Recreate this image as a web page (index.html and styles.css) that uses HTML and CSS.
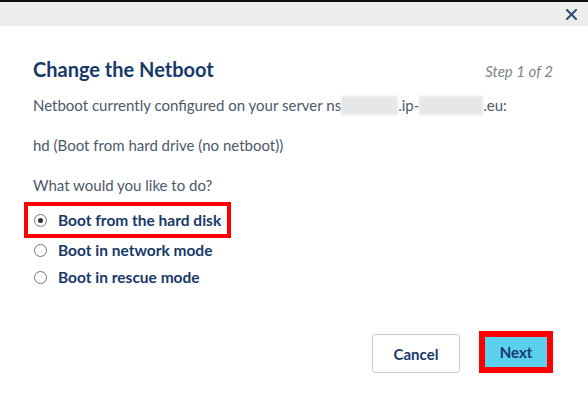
FILE: index.html
```html
<!DOCTYPE html>
<html lang="en">
<head>
<meta charset="utf-8">
<title>Change the Netboot</title>
<link rel="stylesheet" href="styles.css">
</head>
<body>
<div class="modal">
  <div class="topline"></div>
  <div class="header">
    <button class="close" aria-label="Close">
      <svg width="11" height="11" viewBox="0 0 11 11"><path d="M1 1 L10 10 M10 1 L1 10" stroke="#2f4f78" stroke-width="2" stroke-linecap="square"/></svg>
    </button>
  </div>
  <div class="body">
    <div class="title-row">
      <h1 class="title">Change the Netboot</h1>
      <span class="step">Step 1 of 2</span>
    </div>
    <p class="text">Netboot currently configured on your server ns<span class="blur b1"></span>.ip-<span class="blur b2"></span>.eu:</p>
    <p class="text">hd (Boot from hard drive (no netboot))</p>
    <p class="text question">What would you like to do?</p>
    <div class="options">
      <label class="option highlight"><span class="radio checked"></span><span class="label">Boot from the hard disk</span></label>
      <label class="option"><span class="radio"></span><span class="label">Boot in network mode</span></label>
      <label class="option"><span class="radio"></span><span class="label">Boot in rescue mode</span></label>
    </div>
  </div>
  <div class="footer">
    <button class="btn cancel">Cancel</button>
    <div class="next-wrap"><button class="btn next">Next</button></div>
  </div>
</div>
</body>
</html>
```
FILE: styles.css
```css
* { box-sizing: border-box; }
html, body { margin: 0; padding: 0; background: #fff; }
body { font-family: Lato, "Open Sans", sans-serif; width: 588px; height: 393px; overflow: hidden; }

.topline { height: 2px; background: #0f110f; }
.header {
  height: 24px;
  background: #eceeeb;
  display: flex;
  justify-content: flex-end;
  align-items: center;
  padding-right: 11px;
}
.close {
  border: 0; background: transparent; padding: 0; margin: 0;
  width: 11px; height: 11px; display: block;
}
.close svg { display: block; }

.body { padding: 30px 35px 0 33px; }
.title-row { display: flex; justify-content: space-between; align-items: baseline; height: 26px; }
.title {
  margin: 0;
  font-size: 20px;
  font-weight: 700;
  color: #17396a;
  line-height: 26px;
}
.step {
  font-style: italic;
  font-size: 15px;
  color: #7b838d;
}
.text {
  margin: 0;
  font-size: 15px;
  color: #4c596a;
  line-height: 20px;
}
.title-row + .text { margin-top: 13px; }
.text + .text { margin-top: 20px; }
.blur {
  display: inline-block;
  height: 19px;
  vertical-align: -4px;
  background: #e6e7e8;
  filter: blur(1px);
}
.b1 { width: 57px; }
.b2 { width: 64px; }

.options { margin-top: 7px; margin-left: -9px; display: flex; flex-direction: column; }
.option {
  display: flex;
  align-items: center;
  height: 30px;
  padding-left: 6px;
  border: 4px solid transparent;
  width: 207px;
  font-size: 15.5px;
  font-weight: 700;
  color: #17396a;
}
.option.highlight { border-color: #ff0000; height: 36px; }
.option + .option { margin-top: -3px; }
.radio {
  width: 13px; height: 13px;
  border: 1px solid #777;
  border-radius: 50%;
  margin-right: 11px;
  display: flex; align-items: center; justify-content: center;
  flex: none;
}
.radio.checked::after {
  content: "";
  width: 5px; height: 5px; border-radius: 50%;
  background: #333;
}

.footer {
  display: flex;
  justify-content: flex-end;
  align-items: flex-end;
  gap: 19px;
  padding: 0 35px 0 0;
  margin-top: 39px;
}
.btn {
  font-family: Lato, "Open Sans", sans-serif;
  font-size: 15px;
  font-weight: 700;
  color: #17396a;
  cursor: pointer;
}
.cancel {
  width: 88px; height: 39px;
  background: #fff;
  border: 1px solid #c8c8c8;
  border-radius: 3px;
}
.next-wrap {
  border: 6px solid #ff0000;
  width: 74px; height: 42px;
}
.next {
  width: 100%; height: 100%;
  background: #5bd0ee;
  border: 0;
  padding: 0;
}
```
